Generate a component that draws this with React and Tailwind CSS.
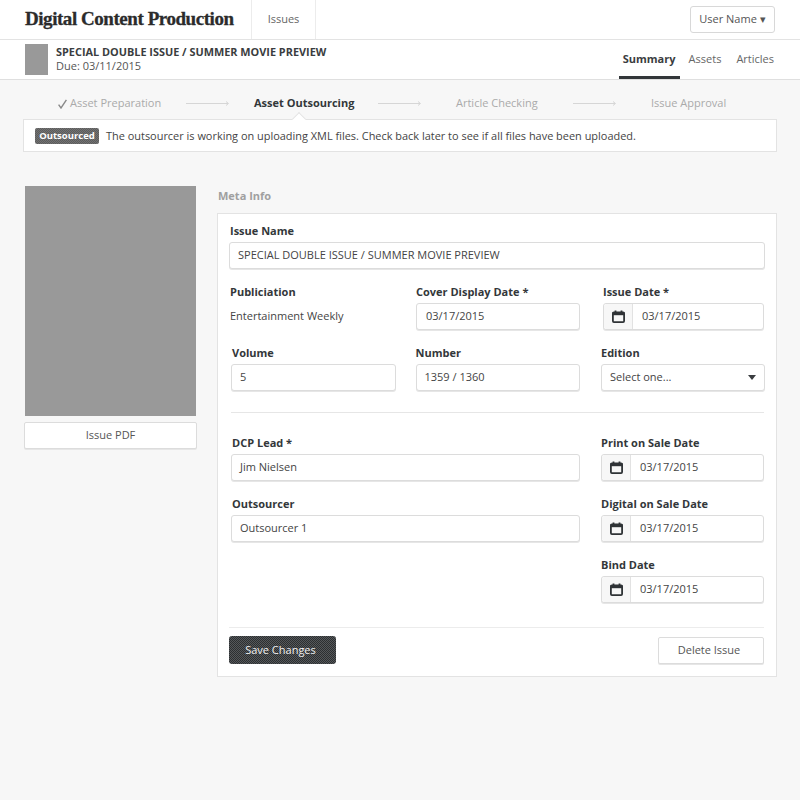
const inputCls = "h-[27px] bg-white border border-[#dcdcdc] rounded-[3px] shadow-[0_1px_0_#e6e6e6] flex items-center text-[11px] text-[#444]";

function Cal() {
  return (
    <svg width="13" height="13" viewBox="0 0 13 13" className="text-[#2f3336]">
      <rect x="0.9" y="2.5" width="11.2" height="9.6" rx="1" fill="none" stroke="currentColor" strokeWidth="1.8" />
      <rect x="0.5" y="2" width="12" height="3.2" fill="currentColor" />
      <rect x="2.6" y="0.5" width="1.8" height="3" fill="currentColor" />
      <rect x="8.6" y="0.5" width="1.8" height="3" fill="currentColor" />
    </svg>
  );
}

function Check() {
  return (
    <svg width="9" height="10" viewBox="0 0 9 10" className="shrink-0 mr-[3px]">
      <path d="M0.6 5.6L3 9L8.4 0.8" fill="none" stroke="#8a8a8a" strokeWidth="1.4" />
    </svg>
  );
}

function Label({ children, className = "" }) {
  return <div className={"text-[11px] font-bold text-[#33373a] leading-[16px] whitespace-nowrap " + className}>{children}</div>;
}

function TextInput({ value, className = "" }) {
  return <div className={inputCls + " pl-[8px] " + className}>{value}</div>;
}

function DateInput({ className = "" }) {
  return (
    <div className={inputCls + " " + className}>
      <div className="w-[29px] h-full flex items-center justify-center bg-[#f7f7f7] border-r border-[#e2e2e2] rounded-l-[3px] shrink-0">
        <Cal />
      </div>
      <span className="pl-[9px]">03/17/2015</span>
    </div>
  );
}

function Arrow({ className = "" }) {
  return (
    <svg width="44" height="7" viewBox="0 0 44 7" className={"shrink-0 " + className}>
      <path d="M0 3.5H42M40 1.5L42.5 3.5L40 5.5" fill="none" stroke="#d6d6d6" strokeWidth="1" />
    </svg>
  );
}

export default function App() {
  return (
    <div className="w-[800px] h-[800px] bg-[#f7f7f7] font-['Open_Sans',sans-serif] text-[#444] overflow-hidden">
      <header className="h-[40px] bg-white border-b border-[#e3e3e3] flex items-center pl-[25px] pr-[25px]">
        <div className="w-[226px] font-['Liberation_Serif',serif] font-bold text-[19px] tracking-[-0.45px] [-webkit-text-stroke:0.3px_#2b2b2b] text-[#2b2b2b] whitespace-nowrap">Digital Content Production</div>
        <div className="h-full w-[65px] border-x border-[#ececec] flex items-center justify-center text-[11px] text-[#666]">Issues</div>
        <div className="ml-auto w-[85px] h-[27px] border border-[#d8d8d8] rounded-[3px] flex items-center justify-center text-[11px] text-[#555]">User Name ▾</div>
      </header>

      <div className="h-[40px] bg-white border-b border-[#dfdfdf] flex pl-[25px] pr-[26px]">
        <div className="w-[23px] h-[31px] bg-[#999] mt-[4px]" />
        <div className="ml-[8px] pt-[4px]">
          <div className="text-[10.9px] font-bold leading-[15px] text-[#3a3d40] whitespace-nowrap">SPECIAL DOUBLE ISSUE / SUMMER MOVIE PREVIEW</div>
          <div className="text-[11px] leading-[14px] text-[#555]">Due: 03/11/2015</div>
        </div>
        <nav className="ml-auto flex text-[11px] text-[#666] h-full">
          <div className="w-[61px] flex items-center justify-center font-bold text-[#3a3d40] border-b-[3px] border-[#33373a] pt-[3px]">Summary</div>
          <div className="ml-[9px] flex items-center">Assets</div>
          <div className="ml-[15px] flex items-center">Articles</div>
        </nav>
      </div>

      <div className="h-[39px] flex items-center pt-[8px] pl-[58px] text-[11px] text-[#aaa] whitespace-nowrap">
        <Check />
        <span className="w-[90px]">Asset Preparation</span>
        <Arrow className="ml-[26px]" />
        <span className="ml-[24px] w-[100px] font-bold text-[#33373a]">Asset Outsourcing</span>
        <Arrow className="ml-[24px]" />
        <span className="ml-[34px] w-[81px]">Article Checking</span>
        <Arrow className="ml-[36px]" />
        <span className="ml-[34px]">Issue Approval</span>
      </div>

      <div className="relative mx-[23px] w-[754px] h-[33px] bg-white border border-[#e3e3e3] flex items-center pl-[11px] pt-[1px] text-[10.95px] text-[#444] whitespace-nowrap">
        <div className="absolute left-[270px] top-[-6px] w-[10px] h-[10px] rotate-45 bg-white border-l border-t border-[#e3e3e3]" />
        <span className="h-[16px] w-[64px] flex items-center justify-center rounded-[2px] text-white text-[9.5px] font-bold bg-[repeating-conic-gradient(#5c5c5c_0_25%,#727272_0_50%)] bg-[length:2px_2px]">Outsourced</span>
        <span className="ml-[7px]">The outsourcer is working on uploading XML files. Check back later to see if all files have been uploaded.</span>
      </div>

      <main className="flex pl-[25px] pt-[34px]">
        <aside className="w-[171px] shrink-0">
          <div className="h-[230px] bg-[#999]" />
          <div className="mt-[6px] h-[27px] w-[173px] -ml-[1px] bg-white border border-[#dcdcdc] rounded-[2px] shadow-[0_1px_0_#e6e6e6] flex items-center justify-center text-[11px] text-[#555]">Issue PDF</div>
        </aside>

        <section className="ml-[21px] w-[560px]">
          <div className="pl-[1px] h-[27px] flex items-center text-[11px] font-bold text-[#a0a0a0] pb-[6px]">Meta Info</div>
          <div className="h-[464px] bg-white border border-[#e3e3e3] pl-[11px] pr-[11px] pt-[9px]">
            <Label className="pl-[1px]">Issue Name</Label>
            <TextInput className="mt-[3px] w-[536px]" value="SPECIAL DOUBLE ISSUE / SUMMER MOVIE PREVIEW" />

            <div className="flex mt-[15px]">
              <div className="w-[187px] pl-[1px]">
                <Label>Publiciation</Label>
                <div className="mt-[8px] text-[11px] leading-[16px] text-[#444]">Entertainment Weekly</div>
              </div>
              <div className="w-[187px]">
                <Label>Cover Display Date *</Label>
                <TextInput className="mt-[3px] w-[164px] pl-[9px]" value="03/17/2015" />
              </div>
              <div className="w-[162px]">
                <Label>Issue Date *</Label>
                <DateInput className="mt-[3px] w-[161px]" />
              </div>
            </div>

            <div className="flex mt-[15px]">
              <div className="w-[187px] pl-[2px]">
                <Label className="pl-[1px]">Volume</Label>
                <TextInput className="mt-[3px] w-[165px]" value="5" />
              </div>
              <div className="w-[186px]">
                <Label>Number</Label>
                <TextInput className="mt-[3px] w-[164px]" value="1359 / 1360" />
              </div>
              <div className="w-[164px]">
                <Label>Edition</Label>
                <div className={inputCls + " mt-[3px] w-[164px] pl-[8px] pr-[8px] justify-between"}>
                  <span>Select one...</span>
                  <span className="w-0 h-0 border-x-[4px] border-x-transparent border-t-[5px] border-t-[#3a3d40]" />
                </div>
              </div>
            </div>

            <div className="ml-[2px] mr-[1px] mt-[21px] border-t border-[#e6e6e6]" />

            <div className="flex mt-[22px] pl-[2px]">
              <div className="w-[370px]">
                <Label className="pl-[1px]">DCP Lead *</Label>
                <TextInput className="mt-[3px] w-[349px]" value="Jim Nielsen" />
                <Label className="pl-[1px] mt-[15px]">Outsourcer</Label>
                <TextInput className="mt-[3px] w-[349px]" value="Outsourcer 1" />
              </div>
              <div className="w-[163px]">
                <Label>Print on Sale Date</Label>
                <DateInput className="mt-[3px] w-[163px]" />
                <Label className="mt-[15px]">Digital on Sale Date</Label>
                <DateInput className="mt-[3px] w-[163px]" />
                <Label className="mt-[15px]">Bind Date</Label>
                <DateInput className="mt-[3px] w-[163px]" />
              </div>
            </div>

            <div className="mt-[24px] w-[535px] border-t border-[#ececec]" />

            <div className="flex justify-between mt-[8px] w-[535px]">
              <div className="w-[107px] h-[28px] rounded-[3px] flex items-center justify-center pr-[4px] text-[11px] text-[#f0f0f0] bg-[repeating-conic-gradient(#2c2f31_0_25%,#55585a_0_50%)] bg-[length:2px_2px]">Save Changes</div>
              <div className="w-[106px] h-[27px] mt-[1px] bg-white border border-[#dcdcdc] rounded-[2px] shadow-[0_1px_0_#e6e6e6] flex items-center justify-center pr-[4px] text-[11px] text-[#555]">Delete Issue</div>
            </div>
          </div>
        </section>
      </main>
    </div>
  );
}
